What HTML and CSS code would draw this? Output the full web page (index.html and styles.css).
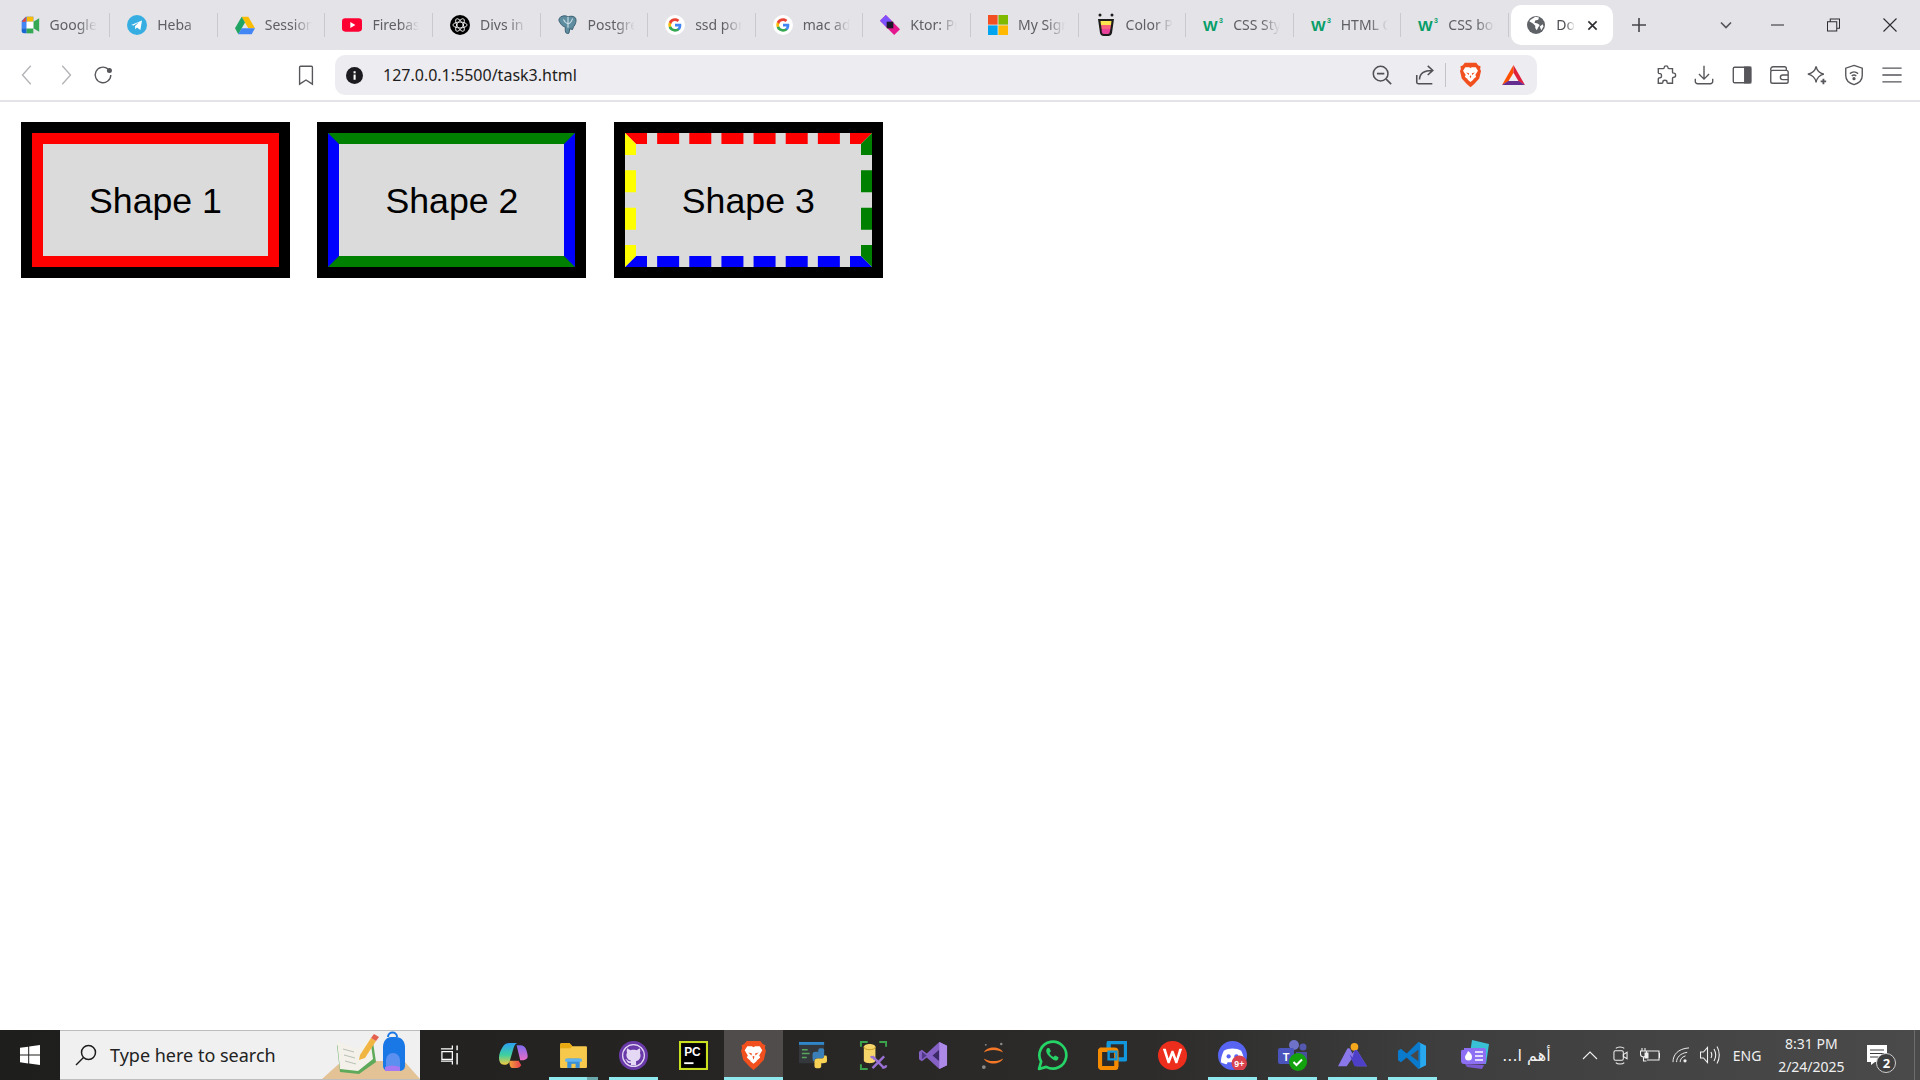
FILE: index.html
```
<!DOCTYPE html>
<html lang="en">
<head>
<meta charset="utf-8">
<title>Document</title>
<link rel="stylesheet" href="styles.css">
</head>
<body>
<svg class="defs" aria-hidden="true">
  <symbol id="g" viewBox="0 0 24 24">
    <circle cx="12" cy="12" r="12" fill="#fff"/>
    <path d="M19.6 12.2c0-.6 0-1.100-.2-1.600H12v3.100h4.300c-.2 1-.8 1.900-1.600 2.400v2h2.600c1.500-1.400 2.300-3.400 2.300-5.900z" fill="#4285f4"/>
    <path d="M12 20c2.200 0 4-.7 5.300-1.900l-2.600-2c-.7.500-1.600.8-2.700.8-2.100 0-3.900-1.400-4.500-3.300H4.600v2.100C5.900 18.200 8.700 20 12 20z" fill="#34a853"/>
    <path d="M7.500 13.600c-.3-1-.3-2.100 0-3.100V8.400H4.600c-.9 1.800-.9 3.900 0 5.700z" fill="#fbbc05" transform="translate(0 .2)"/>
    <path d="M12 7.200c1.200 0 2.200.4 3 1.200l2.300-2.300C15.900 4.800 14.100 4 12 4 8.700 4 5.900 5.800 4.600 8.400l2.900 2.300C8.100 8.700 9.900 7.200 12 7.200z" fill="#ea4335"/>
  </symbol>
  <symbol id="w3" viewBox="0 0 24 20">
    <text class="w3-w" x="2" y="16">W</text>
    <text class="w3-s" x="18" y="8">3</text>
  </symbol>
  <symbol id="brave" viewBox="0 0 24 28">
    <path d="M5.500 0h13L21 3l2.500 1-.5 3 1 2.500-2 8.500-6 6.500-4 3.500-4-3.500-6-6.500-2-8.500L1 7 .5 4 3 3z" fill="#f1501e"/>
    <path d="M6 5h4.500l1.500 1 1.500-1H18l2.500 4-3 5 1 2-3 2.500-1-.5 1 1-3.500 3-3.500-3 1-1-1 .5-3-2.500 1-2-3-5z" fill="#fff"/>
    <path d="M7 11l3.500 1-.5 2zM17 11l-3.500 1 .5 2zM11 15l1 3 1-3-1-.5z" fill="#f1501e"/>
  </symbol>
</svg>

<header class="chrome">
  <div class="tabstrip">
    <div class="tab"><svg class="fav" viewBox="0 0 24 24"><path d="M2 7l5-5h9v6H8v8H2z" fill="#4285f4"/><path d="M2 16h6v6H5a3 3 0 0 1-3-3z" fill="#1967d2"/><path d="M7 2v6H2z" fill="#ea4335"/><path d="M8 16h8v6H8z" fill="#34a853"/><path d="M16 2v6H8V2z" fill="#fbbc04"/><path d="M16 8l7-4v16l-7-4z" fill="#34a853"/><path d="M8 8h8v8H8z" fill="#fff"/></svg><span class="tab-label">Google Meet</span><i class="sep"></i></div>
    <div class="tab"><svg class="fav" viewBox="0 0 24 24"><circle cx="12" cy="12" r="12" fill="#37aee2"/><path d="M5 12l13-5.500-2 11.500-4-3-2 2-.5-3.500 5-5-6.500 4z" fill="#fff"/></svg><span class="tab-label">Heba</span><i class="sep"></i></div>
    <div class="tab"><svg class="fav" viewBox="0 0 24 24"><path d="M8 2h8l8 14h-8z" fill="#fbbc04"/><path d="M8 2l4 7-8 14-4-7z" fill="#1fa463"/><path d="M4 23l4-7h16l-4 7z" fill="#4285f4"/></svg><span class="tab-label">Session</span><i class="sep"></i></div>
    <div class="tab"><svg class="fav" viewBox="0 0 24 24"><rect y="4" width="24" height="16" rx="4" fill="#ff0033"/><path d="M10 8.500l6 3.500-6 3.500z" fill="#fff"/></svg><span class="tab-label">Firebase</span><i class="sep"></i></div>
    <div class="tab"><svg class="fav" viewBox="0 0 24 24"><circle cx="12" cy="12" r="12" fill="#000"/><g fill="none" stroke="#fff" stroke-width="1"><ellipse cx="12" cy="12" rx="8.500" ry="3.500"/><ellipse cx="12" cy="12" rx="8.500" ry="3.500" transform="rotate(60 12 12)"/><ellipse cx="12" cy="12" rx="8.500" ry="3.500" transform="rotate(120 12 12)"/></g></svg><span class="tab-label">Divs in CSS</span><i class="sep"></i></div>
    <div class="tab"><svg class="fav" viewBox="1 0 22 24"><path d="M4 3c4-2 6-1 8 0 3-1 6-1 8 1 2 3 0 8-2 10l-1 3c-1 0-2-.5-3-1l-1 5c-2 1-4 0-4-3v-4C6 14 3 10 2 7c0-2 1-3 2-4z" fill="#5f8da0" stroke="#33586b"/><path d="M12 3v12M7 6c1 3 3 4 5 5m5-6c-1 3-2 5-5 6" fill="none" stroke="#cfe0e8" stroke-width="1.200"/></svg><span class="tab-label">Postgres</span><i class="sep"></i></div>
    <div class="tab"><svg class="fav"><use href="#g"/></svg><span class="tab-label">ssd port</span><i class="sep"></i></div>
    <div class="tab"><svg class="fav"><use href="#g"/></svg><span class="tab-label">mac addr</span><i class="sep"></i></div>
    <div class="tab"><svg class="fav" viewBox="0 0 24 24"><path d="M7 0L24 17l-7 7L0 7z" fill="#e5178f"/><path d="M7 0l7 7-7 7-7-7z" fill="#7f52ff"/><rect x="8" y="8" width="8" height="8" fill="#1a1a2a"/></svg><span class="tab-label">Ktor: Project</span><i class="sep"></i></div>
    <div class="tab"><svg class="fav" viewBox="0 0 24 24"><rect width="11.500" height="11.500" fill="#f25022"/><rect x="12.500" width="11.500" height="11.500" fill="#7fba00"/><rect y="12.500" width="11.500" height="11.500" fill="#00a4ef"/><rect x="12.500" y="12.500" width="11.500" height="11.500" fill="#ffb900"/></svg><span class="tab-label">My Sign-in</span><i class="sep"></i></div>
    <div class="tab"><svg class="fav" viewBox="2 0 20 24"><path d="M4 6h16l-2 14a4 4 0 0 1-4 3h-4a4 4 0 0 1-4-3z" fill="#1c1c1c"/><path d="M6.500 8h11l-.5 4H7z" fill="#fbe44d"/><path d="M7 12h10l-.6 4H7.600z" fill="#f8617c"/><path d="M7.600 16h8.800l-.6 3a2 2 0 0 1-2 2h-4a2 2 0 0 1-2-2z" fill="#e8429a"/><circle cx="6" cy="2" r="1.500" fill="#1c1c1c"/><circle cx="18" cy="2" r="1.500" fill="#1c1c1c"/></svg><span class="tab-label">Color Picker</span><i class="sep"></i></div>
    <div class="tab"><svg class="fav w3-ic"><use href="#w3"/></svg><span class="tab-label">CSS Styling</span><i class="sep"></i></div>
    <div class="tab"><svg class="fav w3-ic"><use href="#w3"/></svg><span class="tab-label">HTML Colors</span><i class="sep"></i></div>
    <div class="tab"><svg class="fav w3-ic"><use href="#w3"/></svg><span class="tab-label">CSS borders</span><i class="sep"></i></div>
    <div class="tab-active">
      <svg class="fav fav-globe" viewBox="0 0 24 24"><circle cx="12" cy="12" r="12" fill="#5f6368"/><path d="M11 1c-2 2-6 3-8 6l5 3 3 3v3l2 3 2-4 2-3-3-2-4-1 1-3 4-1 1-3z" fill="#fff"/><path d="M17 14l4-3 1 3-3 5z" fill="#fff"/></svg>
      <span class="tab-label-active">Document</span>
      <svg class="tab-x" viewBox="0 0 12 12"><path d="M1.500 1.500l9 9m0-9l-9 9"/></svg>
    </div>
    <svg class="newtab" viewBox="0 0 14 14"><path d="M7 0v14M0 7h14"/></svg>
    <svg class="tabs-menu" viewBox="0 0 12 8"><path d="M1 1.500l5 5 5-5"/></svg>
    <div class="win"><svg viewBox="0 0 14 14"><path d="M0 7h14"/></svg></div>
    <div class="win"><svg viewBox="0 0 14 14"><path d="M.5 3.500h10v10H.5zM3.500 3.500v-3h10v10h-3"/></svg></div>
    <div class="win win-close"><svg viewBox="0 0 14 14"><path d="M.5.500l13 13m0-13l-13 13"/></svg></div>
  </div>

  <div class="toolbar">
    <div class="nav">
      <button class="tb faint"><svg viewBox="0 0 24 24"><path d="M15 2l-9 10 9 10"/></svg></button>
      <button class="tb faint"><svg viewBox="0 0 24 24"><path d="M9 2l9 10-9 10"/></svg></button>
      <button class="tb"><svg viewBox="0 0 24 24"><path d="M20.500 12a8.500 8.500 0 1 1-3.200-6.700"/><circle cx="19" cy="7" r="2" class="solid"/></svg></button>
      <span class="nav-space"></span>
      <button class="tb"><svg viewBox="0 0 24 24"><path d="M6 2.500h12a1 1 0 0 1 1 1V22l-7-4.500L5 22V3.500a1 1 0 0 1 1-1z"/></svg></button>
    </div>
    <div class="omnibox">
      <svg class="info" viewBox="0 0 18 18"><circle cx="9" cy="9" r="9" fill="#1c1c20"/><rect x="8" y="8" width="2.200" height="5.500" fill="#fff"/><rect x="8" y="4.500" width="2.200" height="2.200" fill="#fff"/></svg>
      <span class="url">127.0.0.1:5500/task3.html</span>
      <span class="omni-space"></span>
      <span class="omni-ic"><svg viewBox="0 0 24 24"><circle cx="10.500" cy="10.500" r="8"/><path d="M16.500 16.500L22 22M6.500 10.500h8"/></svg></span>
      <span class="omni-ic"><svg viewBox="0 0 24 24"><path d="M3 12v8a1.500 1.500 0 0 0 1.500 1.500h15.500M6 17c0-7 5-10 14-10M15 2l5.500 5-5.500 5"/></svg></span>
      <i class="omni-sep"></i>
      <svg class="omni-brave"><use href="#brave"/></svg>
      <svg class="omni-bat" viewBox="0 0 24 22"><path d="M12 0L0 21l6.500-3.700L12 8z" fill="#ff5000"/><path d="M12 0l12 21-6.500-3.700L12 8z" fill="#e01f3c"/><path d="M0 21h24l-6.500-4.300h-11z" fill="#662d91"/></svg>
    </div>
    <div class="tools">
      <button class="tb"><svg viewBox="0 0 24 24"><path d="M9 3.500c0-2 4-2 4 0 0 1 0 1.500 1 1.500h4v4c0 1 .5 1 1.500 1 2.500 0 2.500 4.500 0 4.500-1 0-1.500 0-1.500 1v5.500h-5c-1 0-1-.5-1-1.500 0-2.300-4.500-2.300-4.500 0 0 1 0 1.500-1 1.500H2.500v-5c0-1 1-1 2-1 2 0 2-4.500 0-4.500-1 0-2 0-2-1V5H8c1 0 1-.5 1-1.500z"/></svg></button>
      <button class="tb"><svg viewBox="0 0 24 24"><path d="M12 2v14M6.500 11l5.500 5.500 5.500-5.500M2.500 16v3a2.500 2.500 0 0 0 2.500 2.500h14a2.500 2.500 0 0 0 2.500-2.500v-3"/></svg></button>
      <button class="tb"><svg viewBox="0 0 24 24"><rect x="2.500" y="3.500" width="19" height="17" rx="1.500"/><rect x="15" y="3.500" width="6.500" height="17" class="solid"/></svg></button>
      <button class="tb"><svg viewBox="0 0 24 24"><path d="M3 7V5.500A2.500 2.500 0 0 1 5.500 3H18a2 2 0 0 1 2 2v2H5a2 2 0 0 0-2 2v10a2 2 0 0 0 2 2h15a2 2 0 0 0 2-2V9a2 2 0 0 0-2-2M22 12h-6a2.500 2.500 0 0 0 0 5h6"/></svg></button>
      <button class="tb"><svg viewBox="0 0 24 24"><path d="M11 2.500c1 5 3.500 7.500 8.500 8.500-5 1-7.500 3.500-8.500 9-1-5.500-3.500-8-9-9 5.500-1 8-3.500 9-8.500z"/><path d="M19 16v6M16 19h6" stroke-width="2"/></svg></button>
      <button class="tb"><svg viewBox="0 0 24 24"><path d="M12 1.500l9 3v8c0 5-4 8.500-9 10-5-1.500-9-5-9-10v-8z"/><path d="M7.500 10.500c2.700-2.300 6.300-2.300 9 0M9.500 13c1.500-1.200 3.500-1.200 5 0"/><circle cx="12" cy="16" r="1" class="solid"/></svg></button>
      <button class="tb"><svg viewBox="0 0 24 24"><path d="M1.500 4.500h21M1.500 12h21M1.500 19.500h21"/></svg></button>
    </div>
  </div>
</header>

<main class="page">
  <div class="frame"><div class="shape shape-1">Shape 1</div></div>
  <div class="frame"><div class="shape shape-2">Shape 2</div></div>
  <div class="frame"><div class="shape shape-3">Shape 3</div></div>
</main>

<footer class="taskbar">
  <div class="start"><svg viewBox="0 0 20 20"><path d="M0 2.800l8.200-1.100v7.900H0zM9.200 1.500L20 0v9.600H9.200zM0 10.500h8.200v7.900L0 17.300zM9.200 10.500H20V20l-10.800-1.500z" fill="#fff"/></svg></div>
  <div class="search">
    <svg class="search-ic" viewBox="0 0 22 22"><circle cx="13.500" cy="8.500" r="7"/><path d="M8.500 13.500L1 21"/></svg>
    <span class="search-text">Type here to search</span>
    <svg class="search-art" viewBox="0 0 98 48"><path d="M0 48l20-18h62l16 18z" fill="#e3c296"/><path d="M15 14l3 27 19 2 17-12-3-20-15 11z" fill="#5eaa5a"/><path d="M15 10l3 28 18 2 15-12-3-21-13 11z" fill="#f3f1ea"/><path d="M21 18l11 3m-10 3l11 3m-10 3l11 3" stroke="#b9c0b6" fill="none"/><path d="M38 24l11-17 5 3-11 17-6 2z" fill="#f1b542"/><path d="M49 7l3-4 5 3-3 4z" fill="#e4604f"/><path d="M59 35V16c0-6 4-10 8-10h5c5 0 9 4 9 10v19a5 5 0 0 1-5 5H64a5 5 0 0 1-5-5z" fill="#1a78e6" transform="translate(2)"/><path d="M66 6c0-6 9-6 9 0" fill="none" stroke="#1a78e6" stroke-width="2"/><path d="M64 40V30c0-5 3-8 7-8s7 3 7 8v10z" fill="#5b8ff0"/><path d="M63 40v-4c5-2 10-2 15 0v4z" fill="#a479f2"/></svg>
  </div>
  <div class="slot slot-task"><svg class="ic-task" viewBox="0 0 20 22"><path d="M1 4.500h12V1M1 17.500h12V21M2 7.500h11v8H2z" fill="none" stroke="#fff" stroke-width="1.300"/><path d="M18 1v5M18 9v12" stroke="#fff" stroke-width="1.500"/></svg></div>
  <div class="slot"><svg class="ic" viewBox="0 0 28 24"><defs><linearGradient id="cp1" x1="0" y1="0" x2="0" y2="1"><stop offset="0" stop-color="#2b9ff0"/><stop offset=".55" stop-color="#3fd0a0"/><stop offset="1" stop-color="#f3c93e"/></linearGradient><linearGradient id="cp2" x1="0" y1="0" x2="0" y2="1"><stop offset="0" stop-color="#7d6cf0"/><stop offset="1" stop-color="#e96cc4"/></linearGradient><linearGradient id="cp3" x1="0" y1="0" x2="1" y2="0"><stop offset="0" stop-color="#f5a03a"/><stop offset="1" stop-color="#e83f4f"/></linearGradient></defs><path d="M17 2l3.500 0c3 0 5 1.500 6 5 1.500 5 1.500 7 .5 8-1.500 1.500-4 2-6.500 1.500z" fill="url(#cp2)"/><path d="M10 17h9l2.500 4.500c-1 1.500-2 2.500-4.500 2.500h-4c-2 0-3-2-3-7z" fill="url(#cp3)"/><path d="M10 0h8c-2 .5-3 2-4 5l-3.500 12c-1 3-3 4-5.500 4C1.500 21 0 18 0 14c0-4 2-8 4-11 1.500-2 3.500-3 6-3z" fill="url(#cp1)"/></svg></div>
  <div class="slot on on-split"><svg class="ic" viewBox="0 0 28 26"><path d="M1 3a2 2 0 0 1 2-2h7l3 3h13a1 1 0 0 1 1 1v19a1 1 0 0 1-1 1H2a1 1 0 0 1-1-1z" fill="#f6c94c"/><path d="M1 3a2 2 0 0 1 2-2h7l3 3-2 2H1z" fill="#e8a912"/><path d="M8 25V16h12v9z" fill="#3a8fd9"/><path d="M6 16h16v3H6z" fill="#5fb4f0"/><path d="M12 25v-4h4v4z" fill="#f6c94c"/></svg></div>
  <div class="slot on"><svg class="ic" viewBox="0 0 28 28"><circle cx="14" cy="14" r="14" fill="#6a3aa8"/><circle cx="14" cy="14" r="10.500" fill="none" stroke="#e4d8f4" stroke-width="1.200"/><path d="M8 7l3 2c2-.6 4-.6 6 0l3-2c.8 2 .6 3.500.2 4.500 1 1.500 1 4.500-1 6.500-1 1-2.700 1.300-2.700 1.300v4h-5v-2c-2 .5-3.500-.5-4-2 0 0-.5-1.500-1.500-1.500 1-.5 2 .5 2.500 1 .5.700 1.500 1 3 .7-.2-.5 0-.5 0-.5s-1.700-.3-2.700-1.300c-2-2-2-5-1-6.500C7.400 10.500 7.200 9 8 7z" fill="#e4d8f4"/></svg></div>
  <div class="slot"><svg class="ic" viewBox="0 0 28 28"><rect width="28" height="28" fill="#c8e020"/><rect x="2" y="2" width="24" height="24" fill="#000"/><text class="pc" x="5" y="14.500">PC</text><rect x="5" y="20.500" width="9" height="1.800" fill="#fff"/></svg></div>
  <div class="slot on slot-active"><svg class="ic"><use href="#brave"/></svg></div>
  <div class="slot"><svg class="ic" viewBox="0 0 30 30"><rect x="0" y="1" width="26" height="22" fill="#34383c"/><rect x="0" y="1" width="26" height="3" fill="#2f86c9"/><path d="M3 9h6M3 13h8M3 17h5" stroke="#58a55c" stroke-width="1.500"/><path d="M14 14c0-3 2-3 5-3h1v-2c0-2 6-2 6 0v6c0 2-1 3-3 3h-5c-2 0-2 2-2 3h-1c-1 0-1-4-1-7z" fill="#3b7fb8"/><path d="M29 20c0 3-2 3-5 3h-1v3c0 3-7 3-7 0v-5c0-2 1-3 3-3h5c2 0 2-2 2-3h2c1 0 1 3 1 5z" fill="#f7d254"/></svg></div>
  <div class="slot"><svg class="ic" viewBox="0 0 30 30"><path d="M2 6V1h7M21 1h7v5M2 24v5h7" fill="none" stroke="#3aa34b" stroke-width="2"/><path d="M5 6c0-4 12-4 12 0v14c0 4-12 4-12 0z" fill="#f6d66b"/><path d="M17 6c0 4-12 4-12 0" fill="none" stroke="#c79a1e"/><path d="M14 28l12-12M26 28L14 16M12 17c2-1 3 0 4 2M24 27c2 1 4 0 4-2" stroke="#9a72d6" stroke-width="2.500" fill="none"/></svg></div>
  <div class="slot"><svg class="ic" viewBox="0 0 30 30"><path d="M21 1l8 4v20l-8 4L8 17l-5 4-3-2V11l3-2 5 4z" fill="#8661c5"/><path d="M21 9v12l-7-6z" fill="#3a2a66"/><path d="M21 1l8 4v20l-8 4z" fill="#ae8ae8"/><path d="M3 11l5 4-5 4z" fill="#4f3a88"/></svg></div>
  <div class="slot"><svg class="ic" viewBox="0 0 30 30"><path d="M5 12c3-7 17-7 20 0-5-3.500-15-3.500-20 0zM5 18c3 7 17 7 20 0-5 3.500-15 3.500-20 0z" fill="#f37726"/><circle cx="23" cy="3" r="1.300" fill="#8a8a8a"/><circle cx="7" cy="4" r="1" fill="#8a8a8a"/><circle cx="5" cy="27" r="2" fill="#8a8a8a"/></svg></div>
  <div class="slot"><svg class="ic ic-wa" viewBox="0 0 30 30"><path d="M2 28l2-7a13 13 0 1 1 5 5z" fill="none" stroke="#25d366" stroke-width="2.600" stroke-linejoin="round"/><path d="M10 8c-2 2-1 5 2 8s6 5 8 3c1-1 1-2 .5-2.500l-3-1.500-1.500 1.500c-2-1-3-2-4-4L13.500 11 12 8c-.5-.5-1.500-.5-2 0z" fill="#25d366"/></svg></div>
  <div class="slot"><svg class="ic" viewBox="0 0 30 30"><path d="M11 9V3a2 2 0 0 1 2-2h14a2 2 0 0 1 2 2v14a2 2 0 0 1-2 2h-6" fill="none" stroke="#1297dd" stroke-width="4.500"/><path d="M3 9h14a2 2 0 0 1 2 2v15a2 2 0 0 1-2 2H4a2 2 0 0 1-2-2V10z" fill="none" stroke="#f58b00" stroke-width="4.500"/><path d="M11 11h8v8h-8z" fill="none" stroke="#1297dd" stroke-width="2.500"/></svg></div>
  <div class="slot"><svg class="ic" viewBox="0 0 30 30"><circle cx="15" cy="15" r="15" fill="#ee2e1d"/><path d="M5 8l5 15h2l3-8 3 8h2l5-15h-3l-3 10-3-8h-2l-3 8-3-10z" fill="#fff"/></svg></div>
  <div class="slot on"><svg class="ic" viewBox="0 0 30 30"><circle cx="15" cy="15" r="15" fill="#5865f2"/><path d="M6 10c5-3 13-3 18 0 2 4 3 8 3 12-2 1-4 2-6 2l-1-2H10l-1 2c-2 0-4-1-6-2 0-4 1-8 3-12z" fill="#fff"/><circle cx="11" cy="16" r="2.200" fill="#5865f2"/><circle cx="19" cy="16" r="2.200" fill="#5865f2"/><circle cx="22" cy="23" r="8" fill="#d9414d"/><text class="badge9" x="22" y="26.500">9+</text></svg></div>
  <div class="slot on"><svg class="ic ic-teams" viewBox="0 0 32 32"><circle cx="17" cy="6" r="5" fill="#6f72c9"/><circle cx="26" cy="8" r="3.500" fill="#5558af"/><path d="M19 13h11v9c0 3-3 5-6 5h-5z" fill="#4b4f9f"/><rect x="1" y="9" width="16" height="16" rx="2" fill="#4b53bc"/><text class="t-letter" x="9" y="21.500">T</text><circle cx="21" cy="23" r="9" fill="#13a10e"/><path d="M16.500 23l3 3 5.500-5.500" stroke="#fff" stroke-width="2" fill="none"/></svg></div>
  <div class="slot on"><svg class="ic" viewBox="0 0 30 30"><circle cx="17" cy="6" r="4" fill="#f6a81c"/><path d="M0 26L9 9c1-2 3-2 4 0l2 4 2-3c1-1 2-1 3 0l10 16H19l-5-7-5 7z" fill="#8a78ea"/><path d="M12 14l3 3 2-7c1-1 2-1 3 0l10 16H17z" fill="#4e3fc9"/></svg></div>
  <div class="slot on"><svg class="ic" viewBox="0 0 30 30"><path d="M21 1l8 4v20l-8 4z" fill="#29a9ed"/><path d="M21 1L9 13 3 8 0 10v10l3 2 6-5 12 12 2-2V3z" fill="#0a7acc"/><path d="M21 9v12l-8-6z" fill="#484848"/></svg></div>
  <div class="slot-news">
    <svg class="ic-news" viewBox="0 0 30 30"><path d="M12 0l17 4-3 20-17-4z" fill="#39c2d6"/><path d="M4 8h20a2 2 0 0 1 2 2v12a2 2 0 0 1-2 2H4a3 3 0 0 1-3-3v-9a2 2 0 0 1 3-2z" fill="#8c6ff2"/><path d="M5 24l19 1-2 4-15-2z" fill="#7a58d0"/><path d="M8 11c3 2 4 4 4 6a3.500 3.500 0 0 1-7 0c0-2 2-3 3-6z" fill="#fff"/><path d="M15 12h8M15 16h8M15 20h8" stroke="#fff" stroke-width="1.500"/></svg>
    <span class="news-text" dir="rtl">أهم ا...</span>
  </div>
  <div class="tray">
    <svg class="tr tr-up" viewBox="0 0 16 9"><path d="M1 8l7-7 7 7"/></svg>
    <svg class="tr tr-cam" viewBox="0 0 16 22"><path d="M3 3.500c2-2 7-2 9 0M3 18.500c2 2 7 2 9 0"/><rect x="1" y="6" width="10" height="10" rx="1.500"/><path d="M11 10l4-2.500v7L11 12z"/></svg>
    <svg class="tr tr-bat" viewBox="0 0 20 14"><path d="M2 0v3M5 0v3M.5 3h6v3a3 3 0 0 1-6 0zM3.500 9v4h3"/><path d="M7 3h12v9H7M19 5.500h1v4h-1"/><rect x="4.500" y="4.500" width="4" height="6" class="tr-fill"/></svg>
    <svg class="tr tr-wifi" viewBox="0 0 20 18"><path d="M1 17C1 9 6 2 19 1M5 17c0-5 4-10 12-11M9 17c0-3 2-6 6-7"/><circle cx="14.500" cy="15.500" r="1.800" class="tr-fill"/></svg>
    <svg class="tr tr-vol" viewBox="0 0 20 18"><path d="M.5 6h3l4-4.500v15L3.500 12h-3zM11 6c1 2 1 4 0 6M14 3c2 3.500 2 8.500 0 12M17 .5c3 5 3 12 0 17"/></svg>
    <span class="lang">ENG</span>
    <div class="clock"><span>8:31 PM</span><span>2/24/2025</span></div>
    <div class="notif">
      <svg class="notif-ic" viewBox="0 0 20 20"><path d="M0 0h20v17H8l-4 3v-3H0z" fill="#fff"/><path d="M3 5h14M3 8.500h14M3 12h8" stroke="#3b3b3b" stroke-width="1.200"/></svg>
      <span class="notif-badge">2</span>
    </div>
    <i class="show-desktop"></i>
  </div>
</footer>
</body>
</html>
```
FILE: styles.css
```
* { box-sizing: border-box; }
html, body { margin: 0; height: 100%; }
body {
  display: flex;
  flex-direction: column;
  height: 100vh;
  overflow: hidden;
  background: #fff;
  font-family: "Noto Sans", "Open Sans", sans-serif;
}
.defs { position: absolute; width: 0; height: 0; }
.w3-w { font: 700 15.500px "Liberation Sans", sans-serif; fill: #089e68; }
.w3-s { font: 700 7px "Liberation Sans", sans-serif; fill: #089e68; }

/* browser chrome */
.chrome { flex: none; }
.tabstrip {
  display: flex;
  align-items: center;
  height: 50px;
  padding-left: 2.600px;
  background: #e3e3e8;
}
.tab {
  flex: none;
  display: flex;
  align-items: center;
  width: 107.600px;
  padding-left: 17px;
  height: 40px;
}
.fav { flex: none; width: 20px; height: 24px; }
.w3-ic { width: 24px; height: 20px; margin-left: -2px; margin-right: -2px; }
.tab-label {
  flex: none;
  width: 47px;
  margin-left: 10px;
  margin-top: -2px;
  overflow: hidden;
  white-space: nowrap;
  font-size: 14px;
  color: #5f6064;
  -webkit-mask-image: linear-gradient(to right, #000 60%, transparent 100%);
  mask-image: linear-gradient(to right, #000 60%, transparent 100%);
}
.sep { width: 1px; height: 24px; margin-left: auto; background: #c9c9ce; }
.tab-active {
  flex: none;
  display: flex;
  align-items: center;
  width: 102px;
  height: 40px;
  margin-left: 2.400px;
  padding-left: 16px;
  border-radius: 10px;
  background: #fff;
}
.fav-globe { width: 18px; height: 18px; }
.tab-label-active {
  width: 19px;
  margin-left: 11px;
  margin-top: -2px;
  overflow: hidden;
  white-space: nowrap;
  font-size: 14px;
  color: #4d4e52;
  -webkit-mask-image: linear-gradient(to right, #000 50%, transparent 100%);
  mask-image: linear-gradient(to right, #000 50%, transparent 100%);
}
.tab-x { width: 11px; height: 11px; margin-left: 12px; fill: none; stroke: #303034; stroke-width: 1.800; }
.newtab { width: 14px; height: 14px; margin-left: 19px; fill: none; stroke: #45454a; stroke-width: 1.600; }
.tabs-menu { width: 12px; height: 8px; margin-left: 74px; fill: none; stroke: #55555a; stroke-width: 1.700; }
.win { flex: none; display: flex; justify-content: center; width: 56.300px; }
.tabs-menu + .win { margin-left: 17px; }
.win svg { width: 13px; height: 14px; fill: none; stroke: #2c2c30; stroke-width: 1.100; }
.win-close svg { width: 14px; }

.toolbar {
  display: flex;
  align-items: center;
  height: 52px;
  padding: 0 9.500px 0 0;
  background: #fff;
  border-bottom: 2px solid #e3e3e8;
}
.nav { flex: none; display: flex; align-items: center; width: 335px; padding: 0 10px 0 9px; }
.nav-space { flex: 1; }
.tb {
  flex: none;
  display: flex;
  align-items: center;
  justify-content: center;
  width: 37.500px;
  height: 30px;
  padding: 0;
  border: 0;
  background: none;
}
.tb svg { width: 22px; height: 22px; fill: none; stroke: #56565b; stroke-width: 1.500; }
.tb .solid { fill: #56565b; }
.faint svg { stroke: #b4b4b8; }
.omnibox {
  flex: none;
  display: flex;
  align-items: center;
  width: 1202px;
  height: 40px;
  padding: 0 12px 0 11px;
  border-radius: 10px;
  background: #edecf1;
}
.info { width: 17px; height: 17px; }
.url { margin-left: 20px; font-size: 16px; color: #1d1d20; white-space: nowrap; }
.omni-space { flex: 1; }
.omni-ic { display: flex; width: 24px; height: 24px; margin-right: 19px; }
.omni-ic svg { width: 22px; height: 22px; margin: auto; fill: none; stroke: #505055; stroke-width: 1.700; }
.omni-ic + .omni-ic { margin-right: 8px; }
.omni-sep { width: 1px; height: 24px; margin-right: 14px; background: #c4c4c9; }
.omni-brave { width: 21px; height: 26px; margin-right: 21px; }
.omni-bat { width: 23px; height: 21px; }
.tools { flex: none; display: flex; margin-left: auto; }

/* page content */
.page {
  flex: 1;
  display: flex;
  align-items: flex-start;
  gap: 27.400px;
  padding: 20px 0 0 21px;
}
.frame { flex: none; padding: 11px; background: #000; }
.shape {
  display: flex;
  align-items: center;
  justify-content: center;
  width: 247px;
  height: 134px;
  padding-top: 2px;
  background: #dbdbdb;
  font: 35.700px "Liberation Sans", Arial, sans-serif;
  color: #000;
}
.shape-1 { border: 11px solid #f00; }
.shape-2 { border: 11px solid; border-color: #008000 #00f; }
.shape-3 { border: 11px dashed; border-color: #f00 #008000 #00f #ff0; }

/* taskbar */
.taskbar {
  flex: none;
  display: flex;
  align-items: stretch;
  height: 50px;
  background: linear-gradient(to right, #1e1e1d 0, #252423 35%, #2d2c2b 60%, #3e3e3e 75%, #4a4a4a 100%);
  color: #fff;
}
.start { flex: none; display: flex; align-items: center; justify-content: center; width: 60px; }
.start svg { width: 20px; height: 20px; }
.search {
  flex: none;
  display: flex;
  align-items: center;
  width: 360px;
  padding-left: 15px;
  border-top: 1px solid #bdbdbd;
  border-bottom: 1px solid #bdbdbd;
  background: #f0f0f0;
  color: #222;
}
.search-ic { width: 22px; height: 22px; fill: none; stroke: #1c1c1c; stroke-width: 1.500; }
.search-text { margin-left: 13px; font-size: 18px; white-space: nowrap; }
.search-art { width: 98px; height: 48px; margin-left: auto; }
.slot {
  flex: none;
  display: flex;
  align-items: center;
  justify-content: center;
  width: 59.900px;
}
.slot-task { width: 64px; padding-right: 6px; }
.ic-task { width: 19px; height: 22px; }
.ic { width: 29px; height: 29px; }
.ic-wa { width: 31px; height: 31px; }
.ic-teams { width: 32px; height: 32px; }
.on { background: linear-gradient(#8ee8ee, #8ee8ee) center bottom / 49px 3px no-repeat; }
.on-split { background: linear-gradient(to right, #8ee8ee 78%, #6aa8ac 78%) center bottom / 49px 3px no-repeat; }
.slot-active { background: linear-gradient(#8ee8ee, #8ee8ee) center bottom / 100% 3px no-repeat, #504c4b; }
.pc { font: 700 11.500px "Liberation Sans", sans-serif; fill: #fff; }
.badge9 { font: 700 9px "Liberation Sans", sans-serif; fill: #fff; text-anchor: middle; }
.t-letter { font: 700 11px "Liberation Sans", sans-serif; fill: #fff; text-anchor: middle; }
.slot-news { flex: none; display: flex; align-items: center; width: 125px; padding-left: 18px; }
.ic-news { width: 30px; height: 30px; }
.news-text { margin-left: 12px; font: 16px "DejaVu Sans", sans-serif; white-space: nowrap; color: #f2f2f2; }
.tray { flex: 1; display: flex; align-items: center; min-width: 0; padding-left: 15px; }
.tr { flex: none; fill: none; stroke: #f0f0f0; stroke-width: 1.100; }
.tr-fill { fill: #f0f0f0; stroke: none; }
.tr-up { width: 16px; height: 9px; }
.tr-cam { width: 15px; height: 21px; margin-left: 15px; }
.tr-bat { width: 20px; height: 14px; margin-left: 12px; }
.tr-wifi { width: 20px; height: 16px; margin-left: 10.500px; }
.tr-vol { width: 20px; height: 18px; margin-left: 9px; }
.lang { margin-left: 13px; font-size: 14px; color: #f0f0f0; }
.clock {
  display: flex;
  flex-direction: column;
  align-items: center;
  gap: 4px;
  width: 70px;
  margin-left: 15px;
  font-size: 14px;
  line-height: 19px;
  color: #f0f0f0;
}
.notif { position: relative; flex: none; width: 20px; height: 20px; margin-left: 21px; }
.notif-ic { width: 20px; height: 20px; display: block; }
.notif-badge {
  position: absolute;
  left: 9px;
  top: 8px;
  width: 20px;
  height: 20px;
  border: 1px solid #cfcfcf;
  border-radius: 50%;
  background: #3f3f3f;
  font-size: 13px;
  font-weight: 700;
  line-height: 18px;
  text-align: center;
}
.show-desktop { width: 1px; align-self: stretch; margin-left: auto; margin-right: 5px; background: #6d6d6d; }
```
